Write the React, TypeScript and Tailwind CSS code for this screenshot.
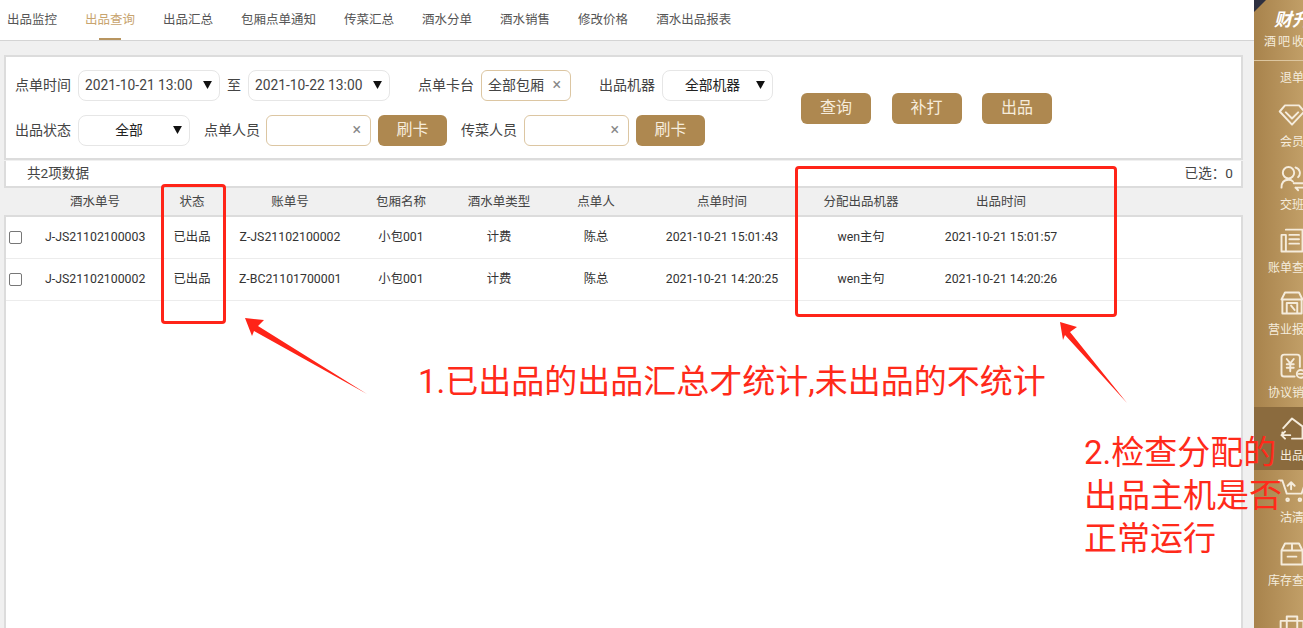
const tabs = ["出品监控", "出品查询", "出品汇总", "包厢点单通知", "传菜汇总", "酒水分单", "酒水销售", "修改价格", "酒水出品报表"];

const columns = ["酒水单号", "状态", "账单号", "包厢名称", "酒水单类型", "点单人", "点单时间", "分配出品机器", "出品时间"];

const rows = [
	["J-JS21102100003", "已出品", "Z-JS21102100002", "小包001", "计费", "陈总", "2021-10-21 15:01:43", "wen主句", "2021-10-21 15:01:57"],
	["J-JS21102100002", "已出品", "Z-BC21101700001", "小包001", "计费", "陈总", "2021-10-21 14:20:25", "wen主句", "2021-10-21 14:20:26"],
];

const gridCols = "grid grid-cols-[40px_100px_94px_102px_120px_76px_118px_134px_144px_136px] items-center";

function Caret() {
	return (
		<svg width="9" height="8" viewBox="0 0 10 9" className="shrink-0">
			<path d="M0 0h10L5 9z" fill="#111" />
		</svg>
	);
}

function Select({ label, width, center }: { label: string; width: string; center?: boolean }) {
	return (
		<div className={`flex h-[31px] items-center justify-between rounded-lg border border-[#e6e6e6] bg-white pl-[6px] pr-[7px] text-[13.8px] ${width}`}>
			<span className={center ? "flex-1 text-center text-[#222]" : "text-[#444]"}>{label}</span>
			<Caret />
		</div>
	);
}

function ClearInput({ label, width }: { label?: string; width: string }) {
	return (
		<div className={`flex h-[31px] items-center justify-between rounded-md border border-[#dcc6a2] bg-white pl-[6px] pr-[9px] ${width}`}>
			<span className="text-[#444]">{label}</span>
			<span className="text-[16px] leading-none text-[#888]">×</span>
		</div>
	);
}

function GoldButton({ label, width }: { label: string; width: string }) {
	return (
		<button className={`flex h-[31px] items-center justify-center rounded-md bg-[#ae8850] text-[16px] text-[#f6ecdc] ${width}`}>{label}</button>
	);
}

function Sidebar() {
	const items = [
		{
			label: "会员",
			icon: <path d="M8 5h16l6 7-14 15L2 12zM9 13l7 7 7-7" />,
		},
		{
			label: "交班",
			icon: (
				<>
					<circle cx="12" cy="10" r="6.5" />
					<path d="M20 4a6.5 6.5 0 0 1 3 11M4 27c0-6 3-9 8-9 2 0 4 .5 5 2M18 22h13M20 27h12M20 27l3 3" />
				</>
			),
		},
		{
			label: "账单查询",
			icon: <path d="M9 3h19v25H4V9h5v19M13 9h11M13 14h11M13 19h11" />,
		},
		{
			label: "营业报表",
			icon: <path d="M8 4h16l4 8H4zM5 12v16h22V12M10 28V16h12v12M15 19l4 5" />,
		},
		{
			label: "协议销售",
			icon: (
				<>
					<path d="M19 28H7a3 3 0 0 1-3-3V6a3 3 0 0 1 3-3h15a3 3 0 0 1 3 3v11M10 8l4 5 4-5M10 14h8M10 18h8M14 13v9" />
					<circle cx="26" cy="25" r="4.5" />
					<path d="M23.5 25h5" />
				</>
			),
		},
		{
			label: "出品",
			active: true,
			icon: <path d="M6 15 16 4l12 9v14H16M5 20v2M14 23H4l4-4M4 23l4 4" />,
		},
		{
			label: "沽清",
			icon: (
				<>
					<path d="M1 4h4l5 15h17l3-9M15 14V6M11 10l4-4 4 4" />
					<circle cx="11" cy="26" r="1.5" />
					<circle cx="25" cy="26" r="1.5" />
				</>
			),
		},
		{
			label: "库存查询",
			icon: <path d="M8 4h16l4 8v16H4V12zM4 12h24M16 4v8M11 19h10" />,
		},
		{
			label: "",
			icon: <path d="M3 9h26v18H3zM10 9V4h12v5M10 9v18M22 9v18" />,
		},
	];

	return (
		<aside className="relative flex w-[76px] shrink-0 flex-col bg-gradient-to-r from-[#a8834c] to-[#cfae76] text-[#f5ecdc]">
			<div className="absolute left-0 top-0 size-0 border-r-[12px] border-t-[12px] border-r-transparent border-t-[#2e3040]" />
			<div className="flex h-[61px] shrink-0 flex-col items-center border-b border-[#dcc6a0] pt-[9px]">
				<span className="text-[18px] font-bold italic leading-[22px] text-white">财升</span>
				<span className="whitespace-nowrap text-[12px] leading-[22px] tracking-[2px]">酒吧收银</span>
			</div>
			<div className="flex h-[33px] shrink-0 items-center justify-center text-[12px]">退单</div>
			{items.map((item) => (
				<div
					key={item.label || "more"}
					className={`flex h-[62.7px] shrink-0 flex-col items-center justify-center gap-[6px] text-[12px] leading-[14px] ${item.active ? "bg-[#8b6b3e]" : ""}`}
				>
					<svg width="28" height="28" viewBox="0 0 32 32" fill="none" stroke="currentColor" strokeWidth="2.2" strokeLinejoin="round" strokeLinecap="round">
						{item.icon}
					</svg>
					{item.label && <span className="whitespace-nowrap">{item.label}</span>}
				</div>
			))}
		</aside>
	);
}

function Annotations() {
	return (
		<div className="pointer-events-none absolute inset-0 text-[33px] leading-[43px] text-[#ff2a1a]">
			<div className="absolute left-[161px] top-[184px] h-[140px] w-[65px] rounded-[4px] border-[3px] border-[#ff2418]" />
			<div className="absolute left-[795px] top-[166px] h-[151px] w-[322px] rounded-[4px] border-[3px] border-[#ff2418]" />
			<svg className="absolute inset-0" width="1303" height="628">
				<path d="M245 318 264 320 258 326 367 394 254 331 252 336z" fill="#ff2418" />
				<path d="M1060 322 1077 327 1070 332 1127 403 1065 335 1063 340z" fill="#ff2418" />
			</svg>
			<div className="absolute left-[418px] top-[360px] whitespace-nowrap">1.已出品的出品汇总才统计,未出品的不统计</div>
			<div className="absolute left-[1084px] top-[431px] whitespace-nowrap">
				<div>2.检查分配的</div>
				<div>出品主机是否</div>
				<div>正常运行</div>
			</div>
		</div>
	);
}

export default function App() {
	return (
		<div className="relative flex h-[628px] w-[1303px] overflow-hidden bg-[#f0f0f0] font-['Roboto','Noto_Sans_CJK_SC',sans-serif] text-[14px] text-[#444]">
			<main className="flex w-[1254px] shrink-0 flex-col">
				<nav className="flex h-[41px] shrink-0 items-start gap-[28px] border-b border-[#d4d4d4] bg-white pl-[7px] pt-[11px] text-[12.5px] leading-[18px]">
					{tabs.map((tab, i) => (
						<div key={tab} className={`relative h-[29px] ${i === 1 ? "text-[#c8a46e]" : "text-[#555]"}`}>
							{tab}
							{i === 1 && <div className="absolute bottom-0 left-[14px] h-[2px] w-[22px] bg-[#b89560]" />}
						</div>
					))}
				</nav>

				<div className="ml-[4px] mt-[14px] flex h-[105px] w-[1239px] shrink-0 items-center border-2 border-[#dcdcdc] bg-white pl-[9px]">
					<div className="flex w-[767px] flex-col gap-[14px]">
						<div className="flex items-center">
							<span className="w-[63px]">点单时间</span>
							<Select label="2021-10-21 13:00" width="w-[142px]" />
							<span className="w-[28px] text-center">至</span>
							<Select label="2021-10-22 13:00" width="w-[142px]" />
							<span className="ml-[28px] w-[63px]">点单卡台</span>
							<ClearInput label="全部包厢" width="w-[90px]" />
							<span className="ml-[28px] w-[63px]">出品机器</span>
							<Select label="全部机器" width="w-[111px]" center />
						</div>
						<div className="flex items-center">
							<span className="w-[63px]">出品状态</span>
							<Select label="全部" width="w-[112px]" center />
							<span className="ml-[14px] w-[62px]">点单人员</span>
							<ClearInput width="w-[105px]" />
							<GoldButton label="刷卡" width="ml-[7px] w-[69px]" />
							<span className="ml-[14px] w-[63px]">传菜人员</span>
							<ClearInput width="w-[105px]" />
							<GoldButton label="刷卡" width="ml-[7px] w-[69px]" />
						</div>
					</div>
					<div className="ml-[19px] mt-[1px] flex gap-[20.5px]">
						<GoldButton label="查询" width="w-[70px]" />
						<GoldButton label="补打" width="w-[70px]" />
						<GoldButton label="出品" width="w-[70px]" />
					</div>
				</div>

				<div className="ml-[4px] mt-[1px] flex h-[27px] w-[1239px] shrink-0 items-center justify-between border-x-2 border-b-2 border-[#dcdcdc] bg-white pl-[21px] pr-[8px] text-[13.6px]">
					<span>共2项数据</span>
					<span>已选：0</span>
				</div>

				<div className={`${gridCols} ml-[5px] h-[27px] shrink-0 pt-[1px] text-center text-[12.5px]`}>
					<span />
					{columns.map((col) => (
						<span key={col}>{col}</span>
					))}
				</div>

				<div className="ml-[4px] w-[1239px] flex-1 border-x-2 border-t-2 border-[#dcdcdc] bg-white">
					{rows.map((row) => (
						<div key={row[0]} className="h-[42px] border-b border-[#ececec]">
							<div className={`${gridCols} -ml-[1px] h-full whitespace-nowrap text-center text-[12.3px] text-[#333]`}>
								<span className="ml-[4px] size-[13px] rounded-[2px] border border-[#777]" />
								{row.map((cell, i) => (
									<span key={i}>{cell}</span>
								))}
							</div>
						</div>
					))}
				</div>
			</main>
			<Sidebar />
			<Annotations />
		</div>
	);
}
